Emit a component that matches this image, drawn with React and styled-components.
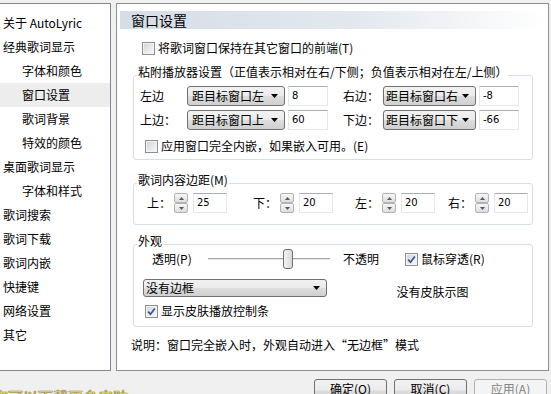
import React from 'react'
import styled, { createGlobalStyle } from 'styled-components'

const GlobalStyle = createGlobalStyle`
  html, body {
    margin: 0;
    padding: 0;
    background: #f0f0f0;
  }
  body {
    font-family: "Noto Sans CJK SC", "Noto Sans", sans-serif;
    font-size: 12px;
    color: #000;
  }
`

const Window = styled.div`
  width: 551px;
  height: 394px;
  overflow: hidden;
  background: #f0f0f0;
  display: flex;
  flex-direction: column;
`

const Body = styled.div`
  display: flex;
  padding-top: 3px;
  height: 368px;
  flex-shrink: 0;
`

const Tree = styled.div`
  width: 114px;
  margin-left: -3px;
  box-sizing: border-box;
  border: 1px solid #828790;
  background: #fff;
  padding-top: 7px;
`

const TreeItem = styled.div`
  height: 24px;
  line-height: 24px;
  padding-left: ${p => (p.$indent ? 24 : 5)}px;
  background: ${p => (p.$selected ? '#ededed' : 'transparent')};
  white-space: nowrap;
`

const Panel = styled.div`
  width: 433px;
  margin-left: 5px;
  box-sizing: border-box;
  border: 1px solid #8e8f8f;
  background: #fff;
  padding: 0 15px 0 16px;
  display: flex;
  flex-direction: column;
`

const Header = styled.div`
  margin: 7px -12px 0 -13px;
  height: 18px;
  line-height: 18px;
  font-size: 14px;
  padding-left: 11px;
  background: linear-gradient(to right, #d5dde7 0%, #e2e8ee 55%, #ffffff 100%);
`

const CheckRow = styled.div`
  display: flex;
  align-items: center;
  height: 16px;
  line-height: 16px;
  gap: 3px;
  margin-top: ${p => p.$mt || 0}px;
  padding-left: ${p => p.$pl || 0}px;
  white-space: nowrap;
`

const Box = styled.span`
  width: 13px;
  height: 13px;
  box-sizing: border-box;
  border: 1px solid #8e8f8f;
  box-shadow: inset 0 0 0 1px #f4f4f4;
  background: linear-gradient(135deg, #cfd2d6 0%, #eeeff0 70%, #f8f8f8 100%);
  display: inline-flex;
  align-items: center;
  justify-content: center;
  flex-shrink: 0;
`

const Group = styled.div`
  border: 1px solid #d5dfe5;
  border-radius: 3px;
  margin-top: ${p => p.$mt}px;
  padding-bottom: ${p => p.$pb}px;
  display: flex;
  flex-direction: column;
`

const GroupTitle = styled.div`
  align-self: flex-start;
  margin: -12px 0 0 3px;
  padding: 0 1px;
  background: #fff;
  line-height: 16px;
  height: 16px;
  white-space: nowrap;
`

const Row = styled.div`
  display: flex;
  align-items: center;
  height: 20px;
  margin-top: ${p => p.$mt || 0}px;
  padding-left: ${p => p.$pl || 0}px;
  white-space: nowrap;
`

const Label = styled.span`
  width: ${p => p.$w}px;
  margin-left: ${p => p.$ml || 0}px;
  flex-shrink: 0;
  line-height: 16px;
`

const SelectBox = styled.div`
  width: ${p => p.$w}px;
  height: ${p => p.$h || 20}px;
  box-sizing: border-box;
  border: 1px solid #707070;
  border-radius: 3px;
  background: linear-gradient(#f2f2f2 0%, #ebebeb 48%, #dddddd 52%, #cfcfcf 100%);
  display: flex;
  align-items: center;
  flex-shrink: 0;
`

const SelectText = styled.span`
  flex: 1;
  overflow: hidden;
  white-space: nowrap;
  padding-left: ${p => p.$pl}px;
  line-height: 16px;
`

const Arrow = styled.svg`
  margin: 0 6px 0 3px;
  flex-shrink: 0;
`

const Input = styled.div`
  width: ${p => p.$w}px;
  height: 20px;
  box-sizing: border-box;
  margin-left: ${p => p.$ml || 0}px;
  border: 1px solid #e3e9ef;
  border-top-color: #abadb3;
  background: #fff;
  font-family: "DejaVu Sans", "Liberation Sans", sans-serif;
  font-size: 10px;
  line-height: 18px;
  padding-left: 3px;
  flex-shrink: 0;
`

const Spin = styled.span`
  display: flex;
  flex-direction: column;
  width: 14px;
  height: 20px;
  flex-shrink: 0;
`

const SpinBtn = styled.span`
  flex: 1;
  box-sizing: border-box;
  border: 1px solid #b3b3b3;
  border-radius: 2px;
  background: linear-gradient(#f7f7f7, #dedede);
  display: flex;
  align-items: center;
  justify-content: center;
`

const Field = styled.div`
  display: flex;
  align-items: center;
  margin-left: ${p => p.$ml}px;
`

const Slider = styled.div`
  position: relative;
  width: 122px;
  height: 20px;
  margin-left: 16px;
  display: flex;
  align-items: center;
  flex-shrink: 0;
`

const Track = styled.div`
  width: 100%;
  height: 1px;
  border-top: 1px solid #a7a7a7;
  border-bottom: 1px solid #fff;
  background: #e6e6e6;
`

const Thumb = styled.div`
  position: absolute;
  left: 75px;
  top: 0;
  width: 10px;
  height: 20px;
  box-sizing: border-box;
  border: 1px solid #707070;
  border-radius: 3px;
  background: linear-gradient(to right, #f4f4f4, #d8d8d8);
`

const Lower = styled.div`
  display: flex;
  margin-top: 10px;
`

const LeftCol = styled.div`
  display: flex;
  flex-direction: column;
  padding-left: 9px;
`

const Preview = styled.div`
  flex: 1;
  display: flex;
  justify-content: center;
  padding-top: 5px;
  line-height: 16px;
  margin-left: 6px;
`

const Note = styled.div`
  margin: 10px 0 0 -2px;
  line-height: 16px;
  white-space: nowrap;
`

const Footer = styled.div`
  display: flex;
  align-items: flex-start;
  padding-top: 7px;
  height: 23px;
`

const Hint = styled.div`
  flex: 1;
  margin: 10px 0 0 -7px;
  font-size: 15px;
  line-height: 18px;
  white-space: nowrap;
  overflow: hidden;
  color: #d8cc58;
  text-shadow: 0 0 1px #5a4b00, 0 0 1px #5a4b00;
`

const Buttons = styled.div`
  display: flex;
  gap: 7px;
  margin-right: 4px;
  margin-top: 1px;
`

const Button = styled.div`
  width: 73px;
  height: 23px;
  box-sizing: border-box;
  border: 1px solid ${p => (p.$disabled ? '#adb2b5' : '#707070')};
  border-radius: 3px;
  background: ${p =>
    p.$disabled
      ? '#f4f4f4'
      : 'linear-gradient(#f2f2f2 0%, #ebebeb 48%, #dddddd 52%, #cfcfcf 100%)'};
  color: ${p => (p.$disabled ? '#838383' : '#000')};
  text-align: center;
  line-height: 17px;
`

function Check({ checked }) {
  return (
    <Box>
      {checked && (
        <svg width="9" height="9" viewBox="0 0 9 9">
          <path d="M1.2 4.6 L3.5 7.2 L7.8 1.4" fill="none" stroke="#3d5489" strokeWidth="1.7" />
        </svg>
      )}
    </Box>
  )
}

function Select({ w, h, pl = 2, children }) {
  return (
    <SelectBox $w={w} $h={h}>
      <SelectText $pl={pl}>{children}</SelectText>
      <Arrow width="7" height="4" viewBox="0 0 7 4">
        <path d="M0 0 L7 0 L3.5 4 Z" fill="#000" />
      </Arrow>
    </SelectBox>
  )
}

function Spinner() {
  return (
    <Spin>
      <SpinBtn>
        <svg width="5" height="3" viewBox="0 0 5 3"><path d="M0 3 L5 3 L2.5 0 Z" fill="#4e5a6e" /></svg>
      </SpinBtn>
      <SpinBtn>
        <svg width="5" height="3" viewBox="0 0 5 3"><path d="M0 0 L5 0 L2.5 3 Z" fill="#4e5a6e" /></svg>
      </SpinBtn>
    </Spin>
  )
}

function MarginField({ label, value, ml }) {
  return (
    <Field $ml={ml}>
      <Label $w={27}>{label}</Label>
      <Spinner />
      <Input $w={34} $ml={5}>{value}</Input>
    </Field>
  )
}

const treeItems = [
  { text: '关于 AutoLyric' },
  { text: '经典歌词显示' },
  { text: '字体和颜色', indent: true },
  { text: '窗口设置', indent: true, selected: true },
  { text: '歌词背景', indent: true },
  { text: '特效的颜色', indent: true },
  { text: '桌面歌词显示' },
  { text: '字体和样式', indent: true },
  { text: '歌词搜索' },
  { text: '歌词下载' },
  { text: '歌词内嵌' },
  { text: '快捷键' },
  { text: '网络设置' },
  { text: '其它' },
]

export default function App() {
  return (
    <Window>
      <GlobalStyle />
      <Body>
        <Tree>
          {treeItems.map(item => (
            <TreeItem key={item.text} $indent={item.indent} $selected={item.selected}>
              {item.text}
            </TreeItem>
          ))}
        </Tree>
        <Panel>
          <Header>窗口设置</Header>
          <CheckRow $mt={11} $pl={9}>
            <Check />
            将歌词窗口保持在其它窗口的前端(T)
          </CheckRow>

          <Group $mt={19} $pb={5}>
            <GroupTitle>粘附播放器设置（正值表示相对在右/下侧；负值表示相对在左/上侧）</GroupTitle>
            <Row $mt={6} $pl={6}>
              <Label $w={47}>左边</Label>
              <Select w={98} pl={4}>距目标窗口左</Select>
              <Input $w={40} $ml={3}>8</Input>
              <Label $w={40} $ml={15}>右边：</Label>
              <Select w={93} pl={2}>距目标窗口右</Select>
              <Input $w={40} $ml={3}>-8</Input>
            </Row>
            <Row $mt={4} $pl={6}>
              <Label $w={47}>上边：</Label>
              <Select w={98} pl={4}>距目标窗口上</Select>
              <Input $w={40} $ml={3}>60</Input>
              <Label $w={40} $ml={15}>下边：</Label>
              <Select w={93} pl={2}>距目标窗口下</Select>
              <Input $w={40} $ml={3}>-66</Input>
            </Row>
            <CheckRow $mt={8} $pl={11}>
              <Check />
              应用窗口完全内嵌，如果嵌入可用。(E)
            </CheckRow>
          </Group>

          <Group $mt={23} $pb={11}>
            <GroupTitle>歌词内容边距(M)</GroupTitle>
            <Row $mt={5}>
              <MarginField label="上：" value="25" ml={13} />
              <MarginField label="下：" value="20" ml={26} />
              <MarginField label="左：" value="20" ml={22} />
              <MarginField label="右：" value="20" ml={13} />
            </Row>
          </Group>

          <Group $mt={19} $pb={7}>
            <GroupTitle>外观</GroupTitle>
            <Row $pl={18}>
              <Label $w={40}>透明(P)</Label>
              <Slider>
                <Track />
                <Thumb />
              </Slider>
              <Label $w={36} $ml={13}>不透明</Label>
              <CheckRow $pl={26}>
                <Check checked />
                鼠标穿透(R)
              </CheckRow>
            </Row>
            <Lower>
              <LeftCol>
                <Select w={184} h={18}>没有边框</Select>
                <CheckRow $mt={6} $pl={2}>
                  <Check checked />
                  显示皮肤播放控制条
                </CheckRow>
              </LeftCol>
              <Preview>没有皮肤示图</Preview>
            </Lower>
          </Group>

          <Note>说明：窗口完全嵌入时，外观自动进入“无边框”模式</Note>
        </Panel>
      </Body>
      <Footer>
        <Hint>您可以下载更多皮肤</Hint>
        <Buttons>
          <Button>确定(O)</Button>
          <Button>取消(C)</Button>
          <Button $disabled>应用(A)</Button>
        </Buttons>
      </Footer>
    </Window>
  )
}
